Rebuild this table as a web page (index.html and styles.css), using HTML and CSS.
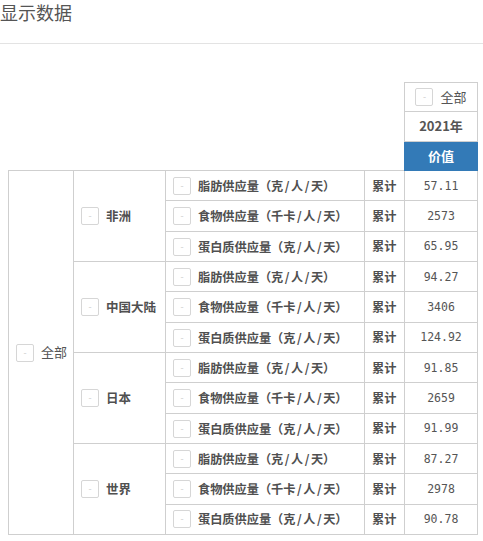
FILE: index.html
```html
<!DOCTYPE html>
<html lang="zh">
<head>
<meta charset="utf-8">
<link rel="stylesheet" href="styles.css">
</head>
<body>
<div class="title">显示数据</div>
<div class="sep"></div>
<div class="wrap">
<table class="pivot">
<colgroup>
<col class="c1"><col class="c2"><col class="c3"><col class="c4"><col class="c5">
</colgroup>
<tbody>
<tr class="hrow"><td class="blank" colspan="4" rowspan="3"></td><td class="hcell"><span class="box">-</span><span class="lbl">全部</span></td></tr>
<tr class="hrow"><td class="hcell year">2021年</td></tr>
<tr class="hrow"><td class="hcell val">价值</td></tr>

<tr><td class="all" rowspan="12"><span class="box">-</span><span class="lbl">全部</span></td>
<td class="reg" rowspan="3"><span class="box">-</span><span class="lbl">非洲</span></td>
<td class="meas"><span class="box">-</span><span class="lbl">脂肪供应量（克<span class="sl">/</span>人<span class="sl">/</span>天）</span></td><td class="agg">累计</td><td class="num">57.11</td></tr>
<tr><td class="meas"><span class="box">-</span><span class="lbl">食物供应量（千卡<span class="sl">/</span>人<span class="sl">/</span>天）</span></td><td class="agg">累计</td><td class="num">2573</td></tr>
<tr><td class="meas"><span class="box">-</span><span class="lbl">蛋白质供应量（克<span class="sl">/</span>人<span class="sl">/</span>天）</span></td><td class="agg">累计</td><td class="num">65.95</td></tr>

<tr><td class="reg" rowspan="3"><span class="box">-</span><span class="lbl">中国大陆</span></td>
<td class="meas"><span class="box">-</span><span class="lbl">脂肪供应量（克<span class="sl">/</span>人<span class="sl">/</span>天）</span></td><td class="agg">累计</td><td class="num">94.27</td></tr>
<tr><td class="meas"><span class="box">-</span><span class="lbl">食物供应量（千卡<span class="sl">/</span>人<span class="sl">/</span>天）</span></td><td class="agg">累计</td><td class="num">3406</td></tr>
<tr><td class="meas"><span class="box">-</span><span class="lbl">蛋白质供应量（克<span class="sl">/</span>人<span class="sl">/</span>天）</span></td><td class="agg">累计</td><td class="num">124.92</td></tr>

<tr><td class="reg" rowspan="3"><span class="box">-</span><span class="lbl">日本</span></td>
<td class="meas"><span class="box">-</span><span class="lbl">脂肪供应量（克<span class="sl">/</span>人<span class="sl">/</span>天）</span></td><td class="agg">累计</td><td class="num">91.85</td></tr>
<tr><td class="meas"><span class="box">-</span><span class="lbl">食物供应量（千卡<span class="sl">/</span>人<span class="sl">/</span>天）</span></td><td class="agg">累计</td><td class="num">2659</td></tr>
<tr><td class="meas"><span class="box">-</span><span class="lbl">蛋白质供应量（克<span class="sl">/</span>人<span class="sl">/</span>天）</span></td><td class="agg">累计</td><td class="num">91.99</td></tr>

<tr><td class="reg" rowspan="3"><span class="box">-</span><span class="lbl">世界</span></td>
<td class="meas"><span class="box">-</span><span class="lbl">脂肪供应量（克<span class="sl">/</span>人<span class="sl">/</span>天）</span></td><td class="agg">累计</td><td class="num">87.27</td></tr>
<tr><td class="meas"><span class="box">-</span><span class="lbl">食物供应量（千卡<span class="sl">/</span>人<span class="sl">/</span>天）</span></td><td class="agg">累计</td><td class="num">2978</td></tr>
<tr><td class="meas"><span class="box">-</span><span class="lbl">蛋白质供应量（克<span class="sl">/</span>人<span class="sl">/</span>天）</span></td><td class="agg">累计</td><td class="num">90.78</td></tr>
</tbody>
</table>
</div>
</body>
</html>
```

FILE: styles.css
```css
html, body {
  margin: 0;
  padding: 0;
  background: #fff;
}
body {
  font-family: "Noto Sans CJK SC", "Noto Sans", sans-serif;
  color: #555;
}
.title {
  font-size: 18px;
  line-height: 25px;
  color: #555;
  padding: 0;
  height: 43px;
}
.sep {
  height: 1px;
  background: #e3e3e3;
}
.wrap {
  padding: 38px 0 0 8px;
}
.pivot {
  border-collapse: collapse;
  table-layout: fixed;
  width: 469px;
  font-size: 13px;
}
.c1 { width: 65px; }
.c2 { width: 92px; }
.c3 { width: 199px; }
.c4 { width: 40px; }
.c5 { width: 73px; }
.pivot td {
  border: 1px solid #cfcfcf;
  padding: 0 0 0 7px;
  white-space: nowrap;
  vertical-align: middle;
  line-height: 16px;
}
.pivot td.blank {
  border: none;
}
.pivot tr {
  height: 30.33px;
}
.pivot tr.hrow {
  height: 29.33px;
}
.pivot td.hcell {
  text-align: center;
  padding: 0;
}
.year {
  font-weight: bold;
  color: #555;
}
.pivot td.val {
  background: #337ab7;
  color: #fff;
  font-weight: bold;
  border-color: #337ab7;
}
.box {
  display: inline-block;
  width: 16px;
  height: 16px;
  border: 1px solid #d6d6d6;
  border-radius: 2px;
  vertical-align: middle;
  text-align: center;
  font-size: 9px;
  line-height: 16px;
  color: #ccc;
  margin-right: 7px;
  font-weight: normal;
}
.lbl {
  vertical-align: middle;
}
.reg .lbl, .meas .lbl, .agg {
  font-weight: bold;
  color: #505050;
}
.reg .lbl {
  font-size: 12.5px;
}
.meas .lbl, .agg {
  font-size: 12.2px;
}
.sl {
  margin: 0 1.5px;
}
.all .lbl {
  color: #555;
}
.pivot td.num {
  text-align: center;
  padding: 0;
  font-family: "DejaVu Sans Mono", "Liberation Mono", monospace;
  font-size: 11.5px;
  color: #555;
}
```
